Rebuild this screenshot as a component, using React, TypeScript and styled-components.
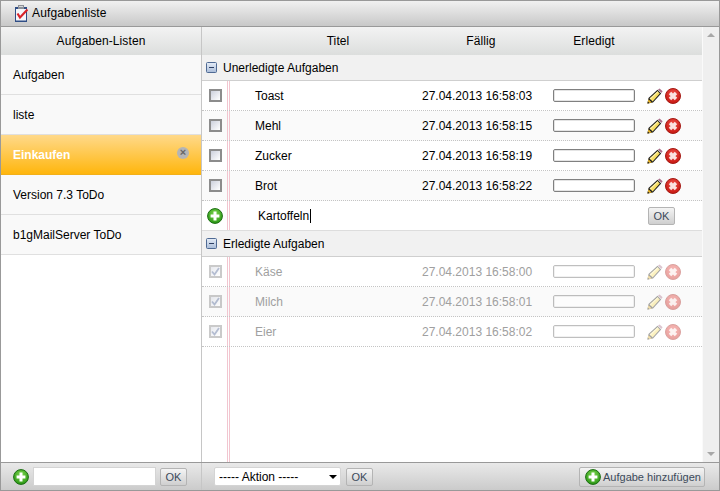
import React from 'react'
import styled, { createGlobalStyle } from 'styled-components'

const lists = ['Aufgaben', 'liste', 'Einkaufen', 'Version 7.3 ToDo', 'b1gMailServer ToDo']

const openTasks = [
  { title: 'Toast', date: '27.04.2013 16:58:03' },
  { title: 'Mehl', date: '27.04.2013 16:58:15' },
  { title: 'Zucker', date: '27.04.2013 16:58:19' },
  { title: 'Brot', date: '27.04.2013 16:58:22' },
]

const doneTasks = [
  { title: 'Käse', date: '27.04.2013 16:58:00' },
  { title: 'Milch', date: '27.04.2013 16:58:01' },
  { title: 'Eier', date: '27.04.2013 16:58:02' },
]

function TaskListIcon() {
  return (
    <svg width="14" height="17" viewBox="0 0 14 17">
      <rect x="1" y="2" width="12" height="15" fill="#2f4d85" />
      <rect x="2" y="4" width="10" height="11.5" fill="#f4f6fa" />
      <rect x="4" y="0" width="6" height="4" fill="#8d9097" />
      <rect x="5" y="1" width="4" height="1" fill="#d5d7db" />
      <path d="M3.5 8.5 L6 12.5 L13.5 4.5" fill="none" stroke="#d8232a" strokeWidth="2.2" />
    </svg>
  )
}

function MinusBox() {
  return (
    <svg width="11" height="11" viewBox="0 0 11 11">
      <defs>
        <linearGradient id="minusFill" x1="0" y1="0" x2="0" y2="1">
          <stop offset="0" stopColor="#e6edf7" />
          <stop offset="1" stopColor="#a9bcd8" />
        </linearGradient>
      </defs>
      <rect x="0.5" y="0.5" width="10" height="10" rx="1" fill="url(#minusFill)" stroke="#4f6a94" />
      <path d="M3 5.5 H8" stroke="#2d3f63" strokeWidth="1" />
    </svg>
  )
}

function PlusIcon() {
  return (
    <svg width="16" height="16" viewBox="0 0 16 16">
      <defs>
        <radialGradient id="plusFill" cx="0.5" cy="0.35" r="0.7">
          <stop offset="0" stopColor="#7fd650" />
          <stop offset="1" stopColor="#23920f" />
        </radialGradient>
      </defs>
      <circle cx="8" cy="8" r="7.4" fill="url(#plusFill)" stroke="#1a6d12" />
      <path d="M8 3.6 V12.4 M3.6 8 H12.4" stroke="#fff" strokeWidth="3" />
    </svg>
  )
}

function PencilIcon() {
  return (
    <svg width="16" height="16" viewBox="0 0 16 16">
      <path d="M0.5 15.5 L1.5 10 L10.5 1.8 L14.2 5.5 L6 14.5 Z" fill="#1c1c1c" />
      <path d="M2.6 10.4 L10.6 3.2 L12.8 5.4 L5.6 13.4 Z" fill="#f8de62" />
      <path d="M2.6 10.4 L10.6 3.2 L11.4 4 L3.6 11.4 Z" fill="#fdf0a6" />
      <path d="M0.5 15.5 L1.4 11.2 L4.8 14.6 Z" fill="#e8b42a" />
      <path d="M0.5 15.5 L0.9 13.5 L2.5 15.1 Z" fill="#1c1c1c" />
      <path d="M11 1.6 L12.6 0.4 L15.6 3.2 L14.4 5 Z" fill="#a8708a" />
    </svg>
  )
}

function DeleteIcon() {
  return (
    <svg width="16" height="16" viewBox="0 0 16 16">
      <defs>
        <radialGradient id="deleteFill" cx="0.5" cy="0.35" r="0.7">
          <stop offset="0" stopColor="#ee5048" />
          <stop offset="1" stopColor="#c4120c" />
        </radialGradient>
      </defs>
      <circle cx="8" cy="8" r="7.5" fill="url(#deleteFill)" stroke="#a51a14" />
      <path d="M5 5 L11 11 M11 5 L5 11" stroke="#fbe3e1" strokeWidth="3.4" />
    </svg>
  )
}

function CheckMark() {
  return (
    <svg width="9" height="9" viewBox="0 0 9 9">
      <path d="M1 4.5 L3.5 7.5 L8 1" fill="none" stroke="#5a6f9c" strokeWidth="1.8" />
    </svg>
  )
}

function TaskRow({ title, date, done }: { title: string; date: string; done?: boolean }) {
  return (
    <Row>
      <CheckBox $faded={done}>{done && <CheckMark />}</CheckBox>
      <TaskTitle $done={done}>{title}</TaskTitle>
      <TaskDate $done={done}>{date}</TaskDate>
      <Progress $faded={done} />
      <Actions $faded={done}>
        <PencilIcon />
        <DeleteIcon />
      </Actions>
    </Row>
  )
}

export default function App() {
  return (
    <Win>
      <GlobalStyle />
      <TitleBar>
        <TaskListIcon />
        <span>Aufgabenliste</span>
      </TitleBar>

      <Body>
        <Sidebar>
          <SideHeader>Aufgaben-Listen</SideHeader>
          <SideList>
            {lists.map((name) => (
              <SideItem key={name} $active={name === 'Einkaufen'}>
                {name}
                {name === 'Einkaufen' && <CloseDot>×</CloseDot>}
              </SideItem>
            ))}
          </SideList>
        </Sidebar>

        <Content>
          <Main>
            <ColumnHeader>
              <span />
              <ColumnTitle>Titel</ColumnTitle>
              <ColumnTitle>Fällig</ColumnTitle>
              <ColumnTitle>Erledigt</ColumnTitle>
            </ColumnHeader>

            <TaskPane>
              <GroupRow>
                <MinusBox />
                Unerledigte Aufgaben
              </GroupRow>
              {openTasks.map((t) => (
                <TaskRow key={t.title} title={t.title} date={t.date} />
              ))}
              <AddRow>
                <PlusIcon />
                <AddText>Kartoffeln</AddText>
                <Button>OK</Button>
              </AddRow>
              <GroupRow>
                <MinusBox />
                Erledigte Aufgaben
              </GroupRow>
              {doneTasks.map((t) => (
                <TaskRow key={t.title} title={t.title} date={t.date} done />
              ))}
            </TaskPane>
          </Main>

          <Scrollbar>
            <ArrowUp />
            <ArrowDown />
          </Scrollbar>
        </Content>
      </Body>

      <Footer>
        <FooterLeft>
          <PlusIcon />
          <ListInput />
          <Button>OK</Button>
        </FooterLeft>
        <FooterRight>
          <SelectWrap>
            <ActionSelect defaultValue="">
              <option value="">----- Aktion -----</option>
            </ActionSelect>
          </SelectWrap>
          <Button>OK</Button>
          <AddButton>
            <PlusIcon />
            Aufgabe hinzufügen
          </AddButton>
        </FooterRight>
      </Footer>
    </Win>
  )
}

const pinkLines = `
  linear-gradient(#f2c6d0, #f2c6d0) 25px 0 / 1px 100% no-repeat,
  linear-gradient(#f2c6d0, #f2c6d0) 27px 0 / 1px 100% no-repeat
`

const GlobalStyle = createGlobalStyle`
  html, body {
    margin: 0;
    padding: 0;
    background: #fff;
  }
  * {
    box-sizing: border-box;
  }
`

const Win = styled.div`
  width: 720px;
  height: 491px;
  display: flex;
  flex-direction: column;
  border: 1px solid #999;
  font-family: 'Liberation Sans', Arial, sans-serif;
  font-size: 12px;
  color: #000;
  overflow: hidden;
`
const TitleBar = styled.div`
  height: 26px;
  flex-shrink: 0;
  display: flex;
  align-items: center;
  gap: 4px;
  padding: 0 0 1px 13px;
  letter-spacing: 0.15px;
  background: linear-gradient(#f1f1f1, #c8c8c8);
  border-bottom: 1px solid #999;
`
const Body = styled.div`
  flex: 1;
  display: flex;
  min-height: 0;
`
const Sidebar = styled.div`
  width: 201px;
  flex-shrink: 0;
  display: flex;
  flex-direction: column;
  border-right: 1px solid #c6c6c6;
`
const SideHeader = styled.div`
  height: 28px;
  flex-shrink: 0;
  display: flex;
  align-items: center;
  justify-content: center;
  padding-bottom: 1px;
  letter-spacing: 0.1px;
  background: linear-gradient(#f3f3f3, #dcdedd);
`
const SideList = styled.div`
  flex: 1;
  background: #fff;
`
const SideItem = styled.div<{ $active?: boolean }>`
  position: relative;
  height: 40px;
  display: flex;
  align-items: center;
  padding-left: 12px;
  background: ${(p) => (p.$active ? 'linear-gradient(#ffd98a, #ffb60d)' : '#f9f9f9')};
  color: ${(p) => (p.$active ? '#fff' : '#000')};
  font-weight: ${(p) => (p.$active ? 'bold' : 'normal')};
  border-bottom: 1px solid ${(p) => (p.$active ? '#f2b01a' : '#e0e0e0')};
`
const CloseDot = styled.span`
  position: absolute;
  right: 12px;
  top: 12px;
  width: 12px;
  height: 12px;
  border-radius: 50%;
  background: #b5b5b5;
  color: #666;
  font-size: 11px;
  font-weight: bold;
  line-height: 11px;
  text-align: center;
`
const Content = styled.div`
  flex: 1;
  display: flex;
  min-width: 0;
`
const Main = styled.div`
  width: 500px;
  display: flex;
  flex-direction: column;
`
const ColumnHeader = styled.div`
  height: 28px;
  flex-shrink: 0;
  display: grid;
  grid-template-columns: 52px 168px 118px 13px 82px;
  align-items: center;
  padding-bottom: 1px;
  letter-spacing: 0.1px;
  background: linear-gradient(#f3f3f3, #dcdedd);
`
const ColumnTitle = styled.div`
  text-align: center;
  &:last-child {
    grid-column: 5;
  }
`
const TaskPane = styled.div`
  flex: 1;
  background: ${pinkLines}, #fff;
`
const GroupRow = styled.div`
  height: 26px;
  display: flex;
  align-items: center;
  gap: 6px;
  padding-left: 4px;
  background: #f1f1f1;
  border-bottom: 1px solid #cfcfcf;
`
const Row = styled.div`
  height: 30px;
  display: grid;
  grid-template-columns: 52px 168px 131px 82px 1fr;
  align-items: center;
  border-bottom: 1px dotted #c4c4c4;
  &:nth-child(odd) {
    background: ${pinkLines}, #fafafa;
  }
`
const CheckBox = styled.div<{ $faded?: boolean }>`
  width: 13px;
  height: 13px;
  margin-left: 7px;
  display: flex;
  align-items: center;
  justify-content: center;
  border: 2px solid #8c8c8c;
  background: linear-gradient(135deg, #ccd0dc, #fff);
  opacity: ${(p) => (p.$faded ? 0.45 : 1)};
`
const TaskTitle = styled.div<{ $done?: boolean }>`
  padding-left: 1px;
  color: ${(p) => (p.$done ? '#a0a0a0' : '#000')};
`
const TaskDate = styled.div<{ $done?: boolean }>`
  color: ${(p) => (p.$done ? '#a0a0a0' : '#000')};
`
const Progress = styled.div<{ $faded?: boolean }>`
  height: 13px;
  border: 1px solid #808080;
  border-radius: 2px;
  background: #fff;
  box-shadow: inset 0 0 0 1px #e4e4e4;
  opacity: ${(p) => (p.$faded ? 0.5 : 1)};
`
const Actions = styled.div<{ $faded?: boolean }>`
  display: flex;
  align-items: center;
  gap: 2px;
  padding-left: 12px;
  opacity: ${(p) => (p.$faded ? 0.4 : 1)};
`
const AddRow = styled.div`
  height: 30px;
  display: flex;
  align-items: center;
  padding: 0 27px 0 5px;
  border-bottom: 1px solid #ddd;
`
const AddText = styled.div`
  flex: 1;
  margin-left: 35px;
  &::after {
    content: '';
    display: inline-block;
    width: 1px;
    height: 14px;
    margin-left: 1px;
    vertical-align: -3px;
    background: #000;
  }
`
const Button = styled.button`
  height: 18px;
  width: 27px;
  padding: 0;
  flex-shrink: 0;
  font-family: inherit;
  font-size: 11px;
  color: #3c4a5a;
  border: 1px solid #b4b4b4;
  border-radius: 2px;
  background: linear-gradient(#f4f4f4, #cfcfcf);
`
const Scrollbar = styled.div`
  flex: 1;
  display: flex;
  flex-direction: column;
  justify-content: space-between;
  align-items: center;
  padding: 6px 0;
  background: #efefef;
  border-left: 1px solid #fafafa;
`
const ArrowUp = styled.div`
  width: 0;
  height: 0;
  border-left: 4px solid transparent;
  border-right: 4px solid transparent;
  border-bottom: 4px solid #a8a8a8;
`
const ArrowDown = styled.div`
  width: 0;
  height: 0;
  border-left: 4px solid transparent;
  border-right: 4px solid transparent;
  border-top: 4px solid #a8a8a8;
`
const Footer = styled.div`
  height: 28px;
  flex-shrink: 0;
  display: flex;
  background: linear-gradient(#e9e9e9, #cbcbcb);
  border-top: 1px solid #999;
`
const FooterLeft = styled.div`
  width: 201px;
  flex-shrink: 0;
  display: flex;
  align-items: center;
  gap: 4px;
  padding-left: 12px;
  border-right: 1px solid #c6c6c6;
`
const ListInput = styled.input`
  width: 123px;
  height: 19px;
  padding: 0 3px;
  border: 1px solid #d4d4d4;
  background: #fff;
  outline: none;
`
const FooterRight = styled.div`
  flex: 1;
  display: flex;
  align-items: center;
  padding: 0 14px 0 12px;
`
const SelectWrap = styled.div`
  position: relative;
  margin-right: 5px;
  &::after {
    content: '';
    position: absolute;
    right: 4px;
    top: 8px;
    border-left: 4px solid transparent;
    border-right: 4px solid transparent;
    border-top: 4px solid #000;
    pointer-events: none;
  }
`
const ActionSelect = styled.select`
  display: block;
  appearance: none;
  width: 127px;
  height: 19px;
  padding: 0 0 0 4px;
  font-family: inherit;
  font-size: 12px;
  color: #000;
  background: #fff;
  border: 1px solid #d4d4d4;
  border-radius: 2px;
`
const AddButton = styled.button`
  margin-left: auto;
  width: 126px;
  height: 20px;
  padding: 0 0 0 5px;
  display: flex;
  align-items: center;
  gap: 2px;
  font-family: inherit;
  font-size: 11px;
  color: #3c4a5a;
  border: 1px solid #b4b4b4;
  border-radius: 2px;
  background: linear-gradient(#f4f4f4, #cfcfcf);
`
